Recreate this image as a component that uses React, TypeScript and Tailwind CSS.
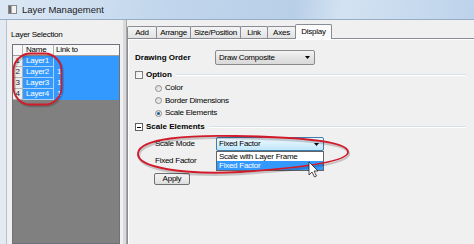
import React from 'react'

const rows = [
  { n: '1', name: 'Layer1', link: '' },
  { n: '2', name: 'Layer2', link: '1' },
  { n: '3', name: 'Layer3', link: '1' },
  { n: '4', name: 'Layer4', link: '1' },
]

const tabs = [
  { label: 'Add', w: 'w-[30px]' },
  { label: 'Arrange', w: 'w-[35px]' },
  { label: 'Size/Position', w: 'w-[51px]' },
  { label: 'Link', w: 'w-[28px]' },
  { label: 'Axes', w: 'w-[29px]' },
]

function Radio({ label, checked }: { label: string; checked?: boolean }) {
  return (
    <div className="flex h-[12.5px] items-center pl-[20px]">
      <span className="flex h-[7px] w-[7px] items-center justify-center rounded-full border border-[#8e8f8f] bg-[linear-gradient(135deg,#d4d4d4,#f6f6f6)]">
        {checked && <span className="h-[3px] w-[3px] rounded-full bg-[#1d5f8f]" />}
      </span>
      <span className="ml-[3px]">{label}</span>
    </div>
  )
}

function GroupLine() {
  return <div className="ml-[4px] mr-[8px] h-[2px] flex-1 border-t border-b border-t-[#d5dfe5] border-b-white" />
}

export default function App() {
  return (
    <div className="relative h-[244px] w-[474px] overflow-hidden bg-[#f0f0f0] font-['Liberation_Sans',Arial,sans-serif] text-[8px] leading-none tracking-[-0.25px] text-black">
      {/* title bar */}
      <div className="flex h-[20px] items-center border-b border-[#97adc6] bg-[linear-gradient(100deg,#dce8f5_0%,#c1d6ec_35%,#b8cfe8_62%,#d3e2f2_72%,#bdd3eb_100%)] pl-[8px]">
        <svg width="9" height="9" viewBox="0 0 9 9">
          <rect x="0.5" y="0.5" width="8" height="8" fill="#f3f3f3" stroke="#8a8a8a" />
          <rect x="1" y="1" width="2.5" height="7" fill="#6b6b6b" />
        </svg>
        <span className="ml-[5px] text-[9.5px] tracking-[0px] text-[#1b1b1b]">Layer Management</span>
      </div>

      <div className="flex h-[224px]">
        {/* window frame */}
        <div className="w-[7px] border-r border-[#b3c1d1] bg-[#e3eaf2]" />

        {/* layer selection */}
        <div className="flex w-[113px] flex-col pl-[5px]">
          <div className="mt-[11px] ml-[-1px] h-[8px]">Layer Selection</div>
          <div className="mt-[5px] flex flex-1 flex-col border border-[#6f7278] bg-[#808080]">
            <div className="flex h-[11px] border-b border-[#a0a0a0] bg-[#f7f7f7]">
              <div className="w-[10px] border-r border-[#b5b5b5]" />
              <div className="flex w-[31px] items-center border-r border-[#b5b5b5] pl-[3px]">Name</div>
              <div className="flex flex-1 items-center pl-[2px]">Link to</div>
            </div>
            {rows.map((r) => (
              <div key={r.n} className="flex h-[11px]">
                <div className="flex w-[10px] items-center justify-center border-r border-b border-[#b0b0b0] bg-[#ececec] text-[#222]">
                  {r.n}
                </div>
                <div className="flex w-[31px] items-center border-r border-b border-[#a9d2fb] bg-[#3399ff] pl-[3px] text-white">
                  {r.name}
                </div>
                <div className="flex flex-1 items-center border-b border-[#3399ff] bg-[#3399ff] pl-[3px] text-white">
                  {r.link}
                </div>
              </div>
            ))}
          </div>
        </div>

        {/* splitter */}
        <div className="w-[7px] border-r border-[#a7a7a7] bg-[#f0f0f0] shadow-[inset_-3px_0_0_#dadada]" />

        {/* tabs area */}
        <div className="flex flex-1 flex-col">
          <div className="flex h-[18px] items-end">
            {tabs.map((t) => (
              <div
                key={t.label}
                className={`${t.w} flex h-[12px] items-center justify-center rounded-t-[2px] border border-b-0 border-[#898c95] bg-[linear-gradient(#f4f4f4,#e2e2e2)] -mr-px`}
              >
                {t.label}
              </div>
            ))}
            <div className="relative z-10 -mb-px flex h-[15px] w-[37px] items-center justify-center rounded-t-[2px] border border-b-0 border-[#898c95] bg-[#fbfbfb] pb-[1px]">
              Display
            </div>
          </div>

          <div className="flex flex-1 flex-col border-t border-l border-[#898c95]">
            <div className="flex flex-1 flex-col border-t border-l border-white pl-[6px] pt-[10px]">
              {/* drawing order */}
              <div className="flex h-[15px] items-center">
                <span className="w-[80px] font-bold tracking-[0px]">Drawing Order</span>
                <div className="flex h-[15px] w-[100px] items-center justify-between rounded-[2px] border border-[#8a8a8a] bg-[linear-gradient(#f3f3f3,#e4e4e4_50%,#d9d9d9)] pl-[3px] pr-[4px]">
                  <span>Draw Composite</span>
                  <svg width="5" height="3" viewBox="0 0 5 3">
                    <path d="M0 0H5L2.5 3Z" fill="#000" />
                  </svg>
                </div>
              </div>

              {/* option group */}
              <div className="mt-[5px] flex h-[10px] items-center">
                <span className="h-[8px] w-[8px] border border-[#7d7d7d] bg-[linear-gradient(135deg,#e9e9e9,#ffffff)]" />
                <span className="ml-[3px] font-bold tracking-[0px]">Option</span>
                <GroupLine />
              </div>
              <div className="mt-[2px]">
                <Radio label="Color" />
                <Radio label="Border Dimensions" />
                <Radio label="Scale Elements" checked />
              </div>

              {/* scale elements group */}
              <div className="mt-[2.5px] flex h-[10px] items-center">
                <span className="flex h-[8px] w-[8px] items-center justify-center border border-[#5f5f5f] bg-white">
                  <span className="h-px w-[4px] bg-black" />
                </span>
                <span className="ml-[3px] font-bold tracking-[0px]">Scale Elements</span>
                <GroupLine />
              </div>

              <div className="mt-[5px] flex h-[14px] items-center pl-[20px]">
                <span className="w-[61px]">Scale Mode</span>
                <div className="relative h-[14px] w-[108px]">
                  <div className="flex h-[14px] items-center justify-between rounded-[2px] border border-[#3c7fb1] bg-[linear-gradient(#eaf6fd,#d9f0fc_50%,#bee6fd)] pl-[2px] pr-[4px]">
                    <span>Fixed Factor</span>
                    <svg width="5" height="3" viewBox="0 0 5 3">
                      <path d="M0 0H5L2.5 3Z" fill="#000" />
                    </svg>
                  </div>
                  <div className="absolute left-0 top-full z-10 w-[108px] border border-[#646464] bg-white">
                    <div className="flex h-[9px] items-center pl-[2px]">Scale with Layer Frame</div>
                    <div className="flex h-[9px] items-center bg-[#3399ff] pl-[2px] text-white">Fixed Factor</div>
                  </div>
                </div>
              </div>

              <div className="mt-[5px] flex h-[10px] items-center pl-[20px]">Fixed Factor</div>

              <div className="ml-[19px] mt-[7px] flex h-[12px] w-[36px] items-center justify-center rounded-[2px] border border-[#707070] bg-[linear-gradient(#f2f2f2,#ebebeb_50%,#dddddd)]">
                Apply
              </div>
            </div>
          </div>
        </div>
      </div>

      {/* annotations drawn over the dialog */}
      <svg className="pointer-events-none absolute inset-0 z-20" width="474" height="244" viewBox="0 0 474 244">
        <rect x="14.5" y="55" width="48" height="51" rx="17" fill="none" stroke="rgba(0,0,0,0.18)" strokeWidth="2.5" />
        <rect x="13.5" y="53.5" width="48" height="51" rx="17" fill="none" stroke="#d11a2a" strokeWidth="1.8" />
        <path
          d="M139,155 C141,140 190,137 235,138 C290,139 349,142 349,154 C349,164 300,170 240,174 C185,177 137,170 139,155 Z"
          fill="none"
          stroke="rgba(0,0,0,0.18)"
          strokeWidth="2.5"
        />
        <path
          d="M138,153 C140,138 190,135 235,136 C290,137 348,140 348,152 C348,162 300,168 240,172 C185,175 136,168 138,153 Z"
          fill="none"
          stroke="#d11a2a"
          strokeWidth="1.8"
        />
        <path
          d="M309,162 L309,175 L312,172 L314.5,177 L316.5,176 L314,171 L318,171 Z"
          fill="#fff"
          stroke="#222"
          strokeWidth="0.8"
          strokeLinejoin="round"
        />
      </svg>
    </div>
  )
}
